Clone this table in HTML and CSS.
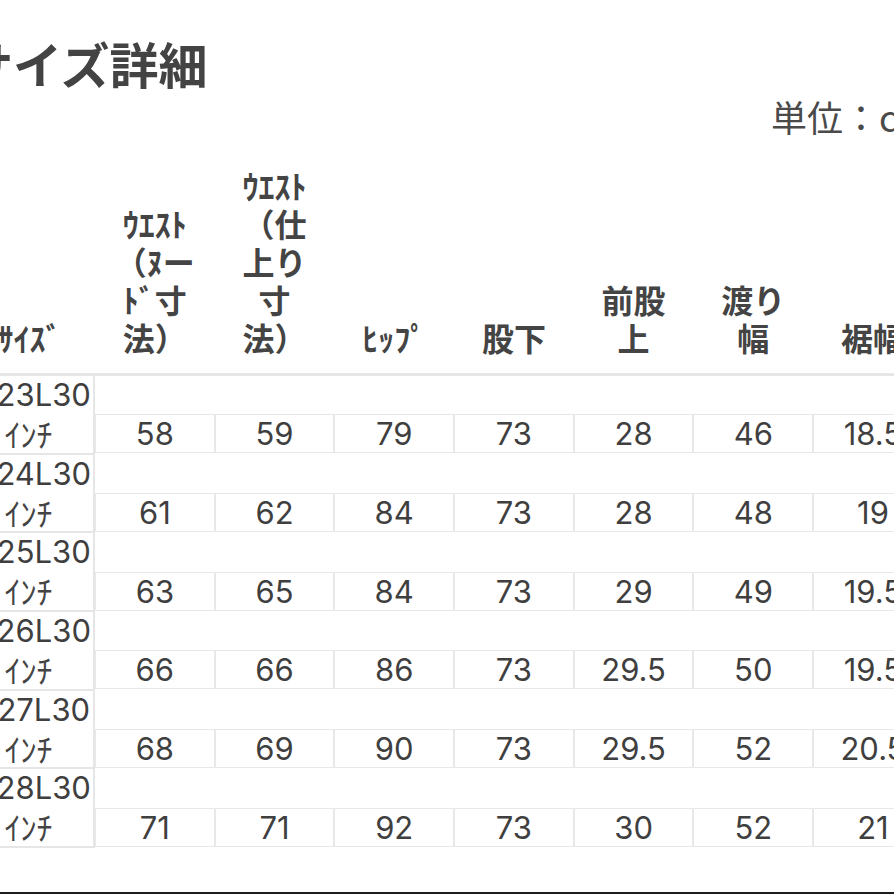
FILE: index.html
```html
<!DOCTYPE html>
<html lang="ja">
<head>
<meta charset="utf-8">
<title>サイズ詳細</title>
<link rel="stylesheet" href="styles.css">
</head>
<body>
<div class="page">
  <h1 class="title">サイズ詳細</h1>
  <div class="unit">単位：cm</div>
  <div class="table">
    <div class="head">
      <div class="hcell">ｻｲｽﾞ</div>
      <div class="hcell">ｳｴｽﾄ<br>（ﾇー<br>ﾄﾞ寸<br>法）</div>
      <div class="hcell">ｳｴｽﾄ<br>（仕<br>上り<br>寸<br>法）</div>
      <div class="hcell">ﾋｯﾌﾟ</div>
      <div class="hcell">股下</div>
      <div class="hcell">前股<br>上</div>
      <div class="hcell">渡り<br>幅</div>
      <div class="hcell">裾幅</div>
    </div>
    <div class="row">
      <div class="size"><span class="code">W23L30</span><span class="inch">ｲﾝﾁ</span></div>
      <div class="cell">58</div><div class="cell">59</div><div class="cell">79</div><div class="cell">73</div><div class="cell">28</div><div class="cell">46</div><div class="cell">18.5</div>
    </div>
    <div class="row">
      <div class="size"><span class="code">W24L30</span><span class="inch">ｲﾝﾁ</span></div>
      <div class="cell">61</div><div class="cell">62</div><div class="cell">84</div><div class="cell">73</div><div class="cell">28</div><div class="cell">48</div><div class="cell">19</div>
    </div>
    <div class="row">
      <div class="size"><span class="code">W25L30</span><span class="inch">ｲﾝﾁ</span></div>
      <div class="cell">63</div><div class="cell">65</div><div class="cell">84</div><div class="cell">73</div><div class="cell">29</div><div class="cell">49</div><div class="cell">19.5</div>
    </div>
    <div class="row">
      <div class="size"><span class="code">W26L30</span><span class="inch">ｲﾝﾁ</span></div>
      <div class="cell">66</div><div class="cell">66</div><div class="cell">86</div><div class="cell">73</div><div class="cell">29.5</div><div class="cell">50</div><div class="cell">19.5</div>
    </div>
    <div class="row">
      <div class="size"><span class="code">W27L30</span><span class="inch">ｲﾝﾁ</span></div>
      <div class="cell">68</div><div class="cell">69</div><div class="cell">90</div><div class="cell">73</div><div class="cell">29.5</div><div class="cell">52</div><div class="cell">20.5</div>
    </div>
    <div class="row">
      <div class="size"><span class="code">W28L30</span><span class="inch">ｲﾝﾁ</span></div>
      <div class="cell">71</div><div class="cell">71</div><div class="cell">92</div><div class="cell">73</div><div class="cell">30</div><div class="cell">52</div><div class="cell">21</div>
    </div>
  </div>
</div>
<div class="bottom-bar"></div>
</body>
</html>
```

FILE: styles.css
```css
html, body {
  margin: 0;
  padding: 0;
  background: #ffffff;
}
body {
  width: 894px;
  height: 894px;
  overflow: hidden;
  position: relative;
  font-family: "Noto Sans CJK JP", "Noto Sans", sans-serif;
  color: #444444;
}
.page {
  width: 894px;
}
.title {
  margin: 34px 0 0 -36px;
  height: 58px;
  font-size: 49px;
  line-height: 58px;
  font-weight: 700;
  color: #434343;
  white-space: nowrap;
}
.unit {
  margin: 2px 0 0 771px;
  height: 44px;
  font-size: 36px;
  line-height: 44px;
  font-weight: 400;
  color: #4a4a4a;
  white-space: nowrap;
}
.table {
  margin: 28px 0 0 -36px;
  width: 969px;
}
.head, .row {
  display: grid;
  grid-template-columns: 131px repeat(7, 119.7px);
}
.head {
  border-bottom: 3px solid #e6e6e6;
}
.hcell {
  display: flex;
  flex-direction: column;
  justify-content: flex-end;
  text-align: center;
  font-size: 32px;
  line-height: 38px;
  font-weight: 700;
  color: #444444;
  padding-bottom: 17px;
  white-space: nowrap;
}
.row {
  height: 78.7px;
}
.size {
  display: flex;
  flex-direction: column;
  align-items: center;
  box-sizing: border-box;
  border-right: 2px solid #e6e6e6;
  border-bottom: 2px solid #e6e6e6;
  line-height: 38px;
  white-space: nowrap;
}
.code {
  font-family: "Inter", "Liberation Sans", sans-serif;
  font-size: 31px;
  color: #3f3f3f;
}
.inch {
  font-family: "Noto Sans CJK JP", sans-serif;
  font-size: 32px;
  color: #444444;
}
.cell {
  margin-top: 38.3px;
  height: 39px;
  box-sizing: border-box;
  border: 1px solid #e8e8e8;
  display: flex;
  align-items: center;
  justify-content: center;
  font-family: "Inter", "Liberation Sans", sans-serif;
  font-size: 31px;
  line-height: 1;
  color: #3f3f3f;
}
.bottom-bar {
  position: absolute;
  left: 0;
  right: 0;
  top: 892px;
  height: 2px;
  background: #1c1c1c;
}
```
